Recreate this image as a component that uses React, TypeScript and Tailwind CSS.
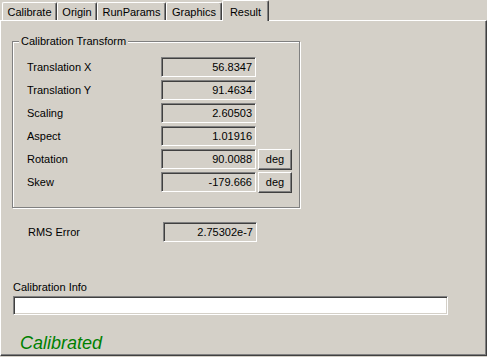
import React from "react"

const font = { fontFamily: '"Liberation Sans", Arial, sans-serif' }

const tabs = [
  { label: "Calibrate", w: "w-[55px]" },
  { label: "Origin", w: "w-[40px]" },
  { label: "RunParams", w: "w-[69px]" },
  { label: "Graphics", w: "w-[56px]" },
]

const rows = [
  { label: "Translation X", value: "56.8347" },
  { label: "Translation Y", value: "91.4634" },
  { label: "Scaling", value: "2.60503" },
  { label: "Aspect", value: "1.01916" },
  { label: "Rotation", value: "90.0088", deg: true },
  { label: "Skew", value: "-179.666", deg: true },
]

function ReadOnlyField({ value, className = "" }: { value: string; className?: string }) {
  return (
    <div
      className={`h-[20px] border-t border-l border-[#808080] border-r border-b border-r-white border-b-white shadow-[inset_1px_1px_0_#404040] flex items-center justify-end pr-[3px] text-[11px] text-black ${className}`}
    >
      {value}
    </div>
  )
}

function DegButton() {
  return (
    <div className="ml-[2px] w-[34px] h-[21px] bg-[#d4d0c8] border-t border-l border-white border-r border-b border-r-[#404040] border-b-[#404040] shadow-[inset_-1px_-1px_0_#808080] flex items-center justify-center text-[11px] text-black">
      deg
    </div>
  )
}

export default function App() {
  return (
    <div className="w-[487px] h-[357px] bg-[#d4d0c8] text-black" style={font}>
      {/* tab strip */}
      <div className="h-[20px] flex items-end pl-[2px] relative z-10">
        {tabs.map((t) => (
          <div
            key={t.label}
            className={`${t.w} h-[18px] border-t border-l border-white border-r border-r-[#404040] shadow-[inset_-1px_0_0_#808080] rounded-t-[2px] flex items-center justify-center text-[11px] pt-[1px]`}
          >
            {t.label}
          </div>
        ))}
        <div className="w-[47px] h-[21px] -mb-[1px] bg-[#d4d0c8] border-t border-l border-white border-r border-r-[#404040] shadow-[inset_-1px_0_0_#808080] rounded-t-[2px] flex items-start justify-center pt-[3px] text-[11px]">
          Result
        </div>
      </div>

      {/* panel */}
      <div className="h-[336px] border-t border-l border-white border-r border-b border-r-[#404040] border-b-[#404040] shadow-[inset_-1px_-1px_0_#808080] flex flex-col">
        {/* group box */}
        <div className="relative ml-[11px] mt-[20px] w-[288px] h-[167px] border border-[#808080] shadow-[inset_1px_1px_0_#fff,1px_1px_0_#fff] pt-[15px] pl-[14px] flex flex-col gap-[3px]">
          <div className="absolute left-[6px] -top-[8px] px-[2px] bg-[#d4d0c8] text-[11px] leading-[14px]">
            Calibration Transform
          </div>
          {rows.map((r) => (
            <div key={r.label} className="flex items-start h-[20px]">
              <div className="w-[134px] h-[20px] flex items-center text-[11px]">{r.label}</div>
              <ReadOnlyField value={r.value} className="w-[95px]" />
              {r.deg && <DegButton />}
            </div>
          ))}
        </div>

        {/* RMS */}
        <div className="flex items-center mt-[14px] pl-[27px]">
          <div className="w-[135px] text-[11px]">RMS Error</div>
          <ReadOnlyField value="2.75302e-7" className="w-[94px]" />
        </div>

        {/* calibration info */}
        <div className="mt-[39px] pl-[12px] text-[11px] leading-[13px]">Calibration Info</div>
        <div className="ml-[12px] mt-[2px] w-[435px] h-[19px] bg-white border-t border-l border-[#808080] border-r border-b border-r-white border-b-white shadow-[inset_1px_1px_0_#404040,inset_-1px_-1px_0_#d4d0c8]" />

        <div className="mt-[18px] pl-[19px] text-[18px] leading-[20px] italic text-[#008000]">
          Calibrated
        </div>
      </div>
    </div>
  )
}
